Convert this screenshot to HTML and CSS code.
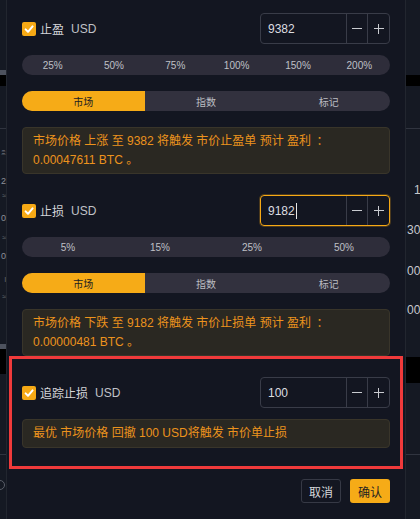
FILE: index.html
```html
<!DOCTYPE html>
<html lang="zh-CN">
<head>
<meta charset="utf-8">
<title>止盈止损</title>
<link rel="stylesheet" href="styles.css">
</head>
<body>
<div class="page">
  <aside class="side side-left">
    <div class="sp" style="height:70px"></div>
    <div class="bar-gray"></div>
    <div class="bar-black" style="height:11px"></div>
    <div class="sp" style="height:42px"></div>
    <div class="hline"></div>
    <div class="sp" style="height:16px"></div>
    <div class="stxt cjk">亖</div>
    <div class="sp" style="height:15px"></div>
    <div class="stxt">2</div>
    <div class="sp" style="height:2px"></div>
    <div class="stxt small">≈</div>
    <div class="sp" style="height:9px"></div>
    <div class="stxt">0</div>
    <div class="sp" style="height:7px"></div>
    <div class="stxt small">≈</div>
    <div class="sp" style="height:5px"></div>
    <div class="stxt">0</div>
    <div class="sp" style="height:11px"></div>
    <div class="stxt small">l</div>
    <div class="sp" style="height:5px"></div>
    <div class="stxt small">≈</div>
    <div class="sp" style="height:41px"></div>
    <div class="bar-gray"></div>
    <div class="bar-black" style="height:25px"></div>
    <div class="sp" style="height:80px"></div>
    <div class="hline"></div>
    <div class="sp" style="height:25px"></div>
    <div class="dot"></div>
  </aside>

  <main class="modal">
    <div class="row">
      <label class="check">
        <span class="box"><svg width="14" height="14" viewBox="0 0 14 14"><path d="M3.6 7.4 L6 9.8 L10.6 4.4" fill="none" stroke="#fff" stroke-width="2" stroke-linecap="round" stroke-linejoin="round"/></svg></span>
        <span class="lbl">止盈</span><span class="unit">USD</span>
      </label>
      <div class="stepper">
        <div class="val">9382</div>
        <div class="btn"><span class="minus"></span></div>
        <div class="btn"><span class="plus"></span></div>
      </div>
    </div>
    <div class="pct pct6">
      <span>25%</span><span>50%</span><span>75%</span><span>100%</span><span>150%</span><span>200%</span>
    </div>
    <div class="tabs">
      <span class="tab active">市场</span><span class="tab">指数</span><span class="tab">标记</span>
    </div>
    <div class="info">市场价格 上涨 至 9382 将触发 市价止盈单 预计 盈利 <span class="colon">：</span><br>0.00047611 BTC 。</div>

    <div class="row row-gap">
      <label class="check">
        <span class="box"><svg width="14" height="14" viewBox="0 0 14 14"><path d="M3.6 7.4 L6 9.8 L10.6 4.4" fill="none" stroke="#fff" stroke-width="2" stroke-linecap="round" stroke-linejoin="round"/></svg></span>
        <span class="lbl">止损</span><span class="unit">USD</span>
      </label>
      <div class="stepper focus">
        <div class="val">9182<span class="caret"></span></div>
        <div class="btn"><span class="minus"></span></div>
        <div class="btn"><span class="plus"></span></div>
      </div>
    </div>
    <div class="pct pct4">
      <span>5%</span><span>15%</span><span>25%</span><span>50%</span>
    </div>
    <div class="tabs">
      <span class="tab active">市场</span><span class="tab">指数</span><span class="tab">标记</span>
    </div>
    <div class="info">市场价格 下跌 至 9182 将触发 市价止损单 预计 盈利 <span class="colon">：</span><br>0.00000481 BTC 。</div>

    <div class="row row-gap">
      <label class="check">
        <span class="box"><svg width="14" height="14" viewBox="0 0 14 14"><path d="M3.6 7.4 L6 9.8 L10.6 4.4" fill="none" stroke="#fff" stroke-width="2" stroke-linecap="round" stroke-linejoin="round"/></svg></span>
        <span class="lbl">追踪止损</span><span class="unit">USD</span>
      </label>
      <div class="stepper">
        <div class="val">100</div>
        <div class="btn"><span class="minus"></span></div>
        <div class="btn"><span class="plus"></span></div>
      </div>
    </div>
    <div class="info info-single">最优 市场价格 回撤 100 USD将触发 市价单止损</div>

    <div class="actions">
      <button class="ghost">取消</button>
      <button class="primary">确认</button>
    </div>
  </main>

  <aside class="side side-right">
    <div class="sp" style="height:75px"></div>
    <div class="bar-black" style="height:11px"></div>
    <div class="sp" style="height:42px"></div>
    <div class="hline"></div>
    <div class="sp" style="height:54px"></div>
    <div class="rtxt ind">1</div>
    <div class="sp" style="height:26px"></div>
    <div class="rtxt">30</div>
    <div class="sp" style="height:27px"></div>
    <div class="rtxt">00</div>
    <div class="sp" style="height:25px"></div>
    <div class="rtxt">00</div>
    <div class="sp" style="height:40px"></div>
    <div class="bar-black" style="height:26px"></div>
    <div class="sp" style="height:71px"></div>
    <div class="hline"></div>
  </aside>
</div>
<div class="highlight"></div>
</body>
</html>
```

FILE: styles.css
```css
* { box-sizing: border-box; }

html, body {
  margin: 0;
  padding: 0;
  background: #141823;
  width: 420px;
  height: 519px;
  overflow: hidden;
}

body {
  position: relative;
  font-family: "Liberation Sans", "Noto Sans CJK SC", sans-serif;
  font-size: 12px;
  color: #cfd0d5;
}

.page {
  display: flex;
  height: 519px;
}

/* background strips */
.side {
  display: flex;
  flex-direction: column;
  overflow: hidden;
  background: #151923;
}
.side-left { width: 6px; }
.side-right { width: 14px; }
.sp { flex: none; }
.bar-gray { height: 5px; background: #4d525e; flex: none; }
.bar-black { background: #000; flex: none; }
.hline { height: 1px; background: #30343f; flex: none; }
.stxt {
  height: 14px;
  line-height: 14px;
  font-size: 9px;
  color: #8d9099;
  white-space: nowrap;
  text-align: right;
  flex: none;
}
.stxt.cjk { font-size: 5px; }
.stxt.small { height: 12px; line-height: 12px; font-size: 7px; color: #6f737c; }
.dot {
  width: 10px; height: 10px;
  margin-left: -5px;
  border-radius: 50%;
  border: 1px solid #5a5e69;
  flex: none;
}
.rtxt {
  height: 14px;
  line-height: 14px;
  font-size: 12px;
  color: #c6c8cd;
  white-space: nowrap;
  padding-left: 1px;
  flex: none;
}
.rtxt.ind { padding-left: 8px; }

/* modal */
.modal {
  width: 400px;
  flex: none;
  background: #131621;
  border-left: 1px solid #22262f;
  border-right: 1px solid #22262f;
  padding: 13px 15px 0 15px;
  display: flex;
  flex-direction: column;
}

.row {
  height: 31px;
  display: flex;
  align-items: center;
  justify-content: space-between;
  flex: none;
}
.row-gap { margin-top: 21px; }

.check {
  display: flex;
  align-items: center;
}
.box {
  width: 14px;
  height: 14px;
  border-radius: 2px;
  background: #f6a915;
  display: flex;
}
.lbl {
  margin-left: 4px;
  color: #d4d5d9;
}
.unit {
  margin-left: 7px;
  color: #c0c2c7;
}

.stepper {
  width: 130px;
  height: 31px;
  border: 1px solid #393c48;
  border-radius: 4px;
  display: grid;
  grid-template-columns: 1fr 21px 22px;
}
.stepper.focus {
  border-color: #f6a915;
  box-shadow: 0 0 0 1px rgba(246, 169, 21, 0.25);
}
.val {
  display: flex;
  align-items: center;
  padding-left: 7px;
  font-size: 12px;
  color: #dcdde0;
}
.caret {
  width: 1px;
  height: 16px;
  background: #e6e6e6;
  margin-left: 1px;
}
.btn {
  border-left: 1px solid #393c48;
  display: flex;
  align-items: center;
  justify-content: center;
  position: relative;
}
.minus, .plus {
  width: 10px;
  height: 10px;
  position: relative;
}
.minus::before, .plus::before, .plus::after {
  content: "";
  position: absolute;
  background: #c9cbd0;
}
.minus::before, .plus::before {
  left: 0; right: 0;
  top: 4.25px;
  height: 1.5px;
}
.plus::after {
  top: 0; bottom: 0;
  left: 4.25px;
  width: 1.5px;
}

.pct {
  margin-top: 11px;
  height: 20px;
  border-radius: 10px;
  background: #2e2d3a;
  display: grid;
  align-items: center;
  justify-items: center;
  font-size: 10px;
  color: #bfc0c6;
  flex: none;
}
.pct6 { grid-template-columns: repeat(6, 1fr); }
.pct4 { grid-template-columns: repeat(4, 1fr); }

.tabs {
  margin-top: 16px;
  height: 20px;
  border-radius: 10px;
  background: #32313e;
  overflow: hidden;
  display: grid;
  grid-template-columns: repeat(3, 1fr);
  font-size: 10px;
  flex: none;
}
.tab {
  display: flex;
  align-items: center;
  justify-content: center;
  color: #bcbdc3;
}
.tab.active {
  background: #f6ab17;
  color: #1d1d22;
}

.info {
  margin-top: 16px;
  background: #2a2822;
  border: 1px solid #39352a;
  border-radius: 4px;
  padding: 4px 10px 3px;
  line-height: 19px;
  font-size: 12px;
  color: #ec931d;
  flex: none;
}
.colon { margin-left: 2px; }
.info-single {
  margin-top: 11px;
  padding-bottom: 4px;
}

.actions {
  margin-top: 31px;
  display: flex;
  justify-content: flex-end;
  gap: 9px;
}
.actions button {
  width: 40px;
  height: 24px;
  border-radius: 3px;
  font-family: inherit;
  font-size: 12px;
  padding: 0;
  cursor: pointer;
}
.ghost {
  background: transparent;
  border: 1px solid #363945;
  color: #d6d7db;
}
.primary {
  background: #f6ab17;
  border: none;
  color: #1d1d22;
}

/* annotation overlay */
.highlight {
  position: absolute;
  left: 9px;
  top: 356px;
  width: 394px;
  height: 113px;
  border: 3px solid #f03a3b;
  pointer-events: none;
}
```
